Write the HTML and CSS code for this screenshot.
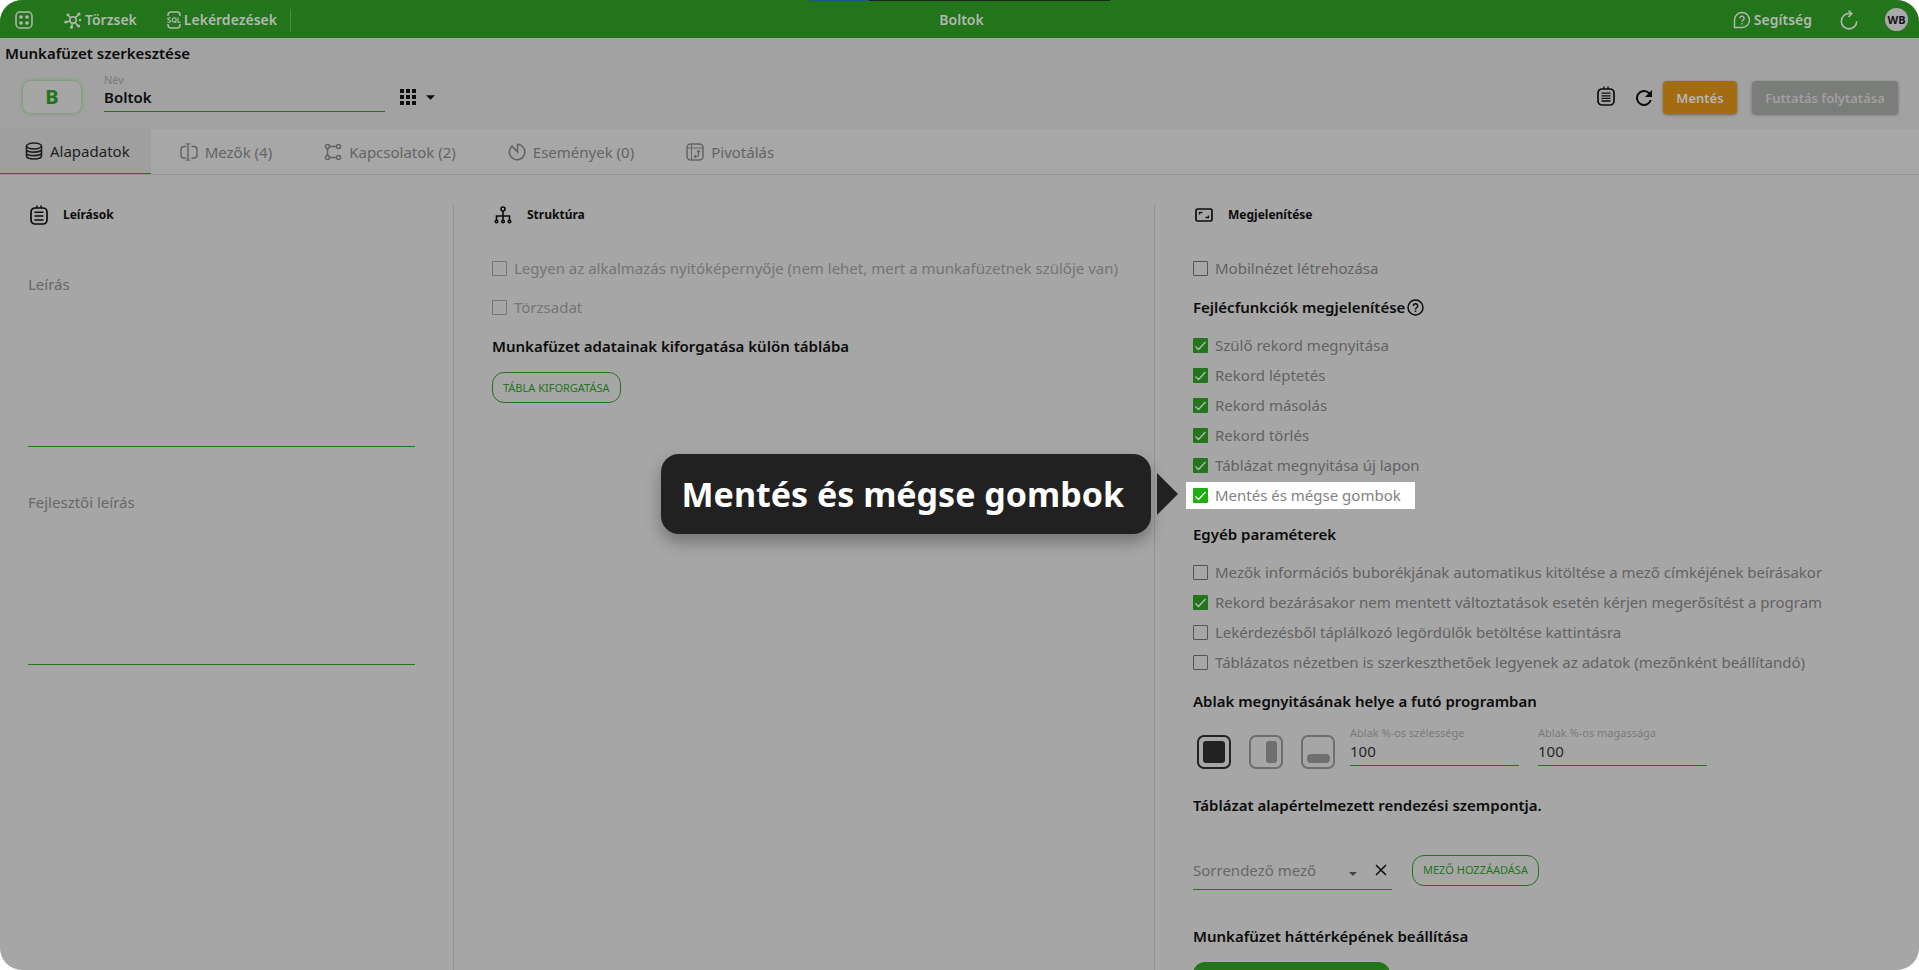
FILE: index.html
```html
<!DOCTYPE html>
<html lang="hu">
<head>
<meta charset="utf-8">
<title>Boltok</title>
<link rel="stylesheet" href="styles.css">
</head>
<body>
<div class="app">
  <header class="topbar">
    <nav class="topbar-side">
      <button class="bar-button apps" aria-label="Alkalmazások">
        <svg width="18" height="18" viewBox="0 0 18 18" fill="none" stroke="currentColor" stroke-width="1.5"><rect x="1" y="1" width="16" height="16" rx="4"/><g fill="currentColor" stroke="none"><circle cx="6" cy="6" r="1.8"/><circle cx="12" cy="6" r="1.8"/><circle cx="6" cy="12" r="1.8"/><circle cx="12" cy="12" r="1.8"/></g></svg>
      </button>
      <button class="bar-button masters">
        <svg width="18" height="18" viewBox="0 0 18 18" fill="none" stroke="currentColor" stroke-width="1.5"><circle cx="9" cy="9" r="3.2"/><path d="M6.6 6.8 4 4M11.4 6.8 14.5 3.5M6 10 2.5 11M11 11.6 14 15M8.4 12.2 7.6 16"/><g fill="currentColor" stroke="none"><circle cx="3.8" cy="3.8" r="1.4"/><circle cx="15" cy="3" r="1.6"/><circle cx="1.8" cy="11" r="1.5"/><circle cx="14.6" cy="15" r="1.6"/><circle cx="7.5" cy="16.3" r="1.5"/><circle cx="16" cy="9" r="1.2"/></g></svg>
        Törzsek
      </button>
      <button class="bar-button queries">
        <svg width="14" height="18" viewBox="0 0 14 18" fill="none" stroke="currentColor" stroke-width="1.5"><path d="M1 5V4a3 3 0 0 1 3-3h6a3 3 0 0 1 3 3v1M1 13v1a3 3 0 0 0 3 3h6a3 3 0 0 0 3-3v-1"/><g stroke-width="1.1"><path d="M3.800 7.200C3.200 6.500.7 6.500.7 7.800.7 9.300 3.900 8.600 3.900 10.200 3.900 11.500 1.200 11.500.4 10.700"/><ellipse cx="7.300" cy="9" rx="1.900" ry="2.200"/><path d="M7.600 10 9.200 11.600M11 6.600v4.600h2.800"/></g></svg>
        Lekérdezések
      </button>
      <span class="bar-divider"></span>
    </nav>
    <h1 class="bar-title">Boltok</h1>
    <div class="topbar-side end">
      <button class="bar-button help">
        <svg width="18" height="18" viewBox="0 0 18 18" fill="none" stroke="currentColor" stroke-width="1.400"><path d="M1.500 16.500V9A7.500 7.500 0 1 1 9 16.500z"/><path d="M6.900 7.200a2.100 2.100 0 1 1 3.100 1.900c-.8.400-1 .8-1 1.600M9 12v1.400"/></svg>
        Segítség
      </button>
      <button class="bar-button reload" aria-label="Újratöltés">
        <svg width="18" height="20" viewBox="0 0 18 20" fill="none" stroke="currentColor" stroke-width="1.600"><path d="M11 3.500H9A7.700 7.700 0 1 0 16.700 11.200M8.500.6 11.800 3.500 8.500 7"/></svg>
      </button>
      <span class="avatar">WB</span>
    </div>
    <span class="progress"><span class="progress-done"></span></span>
  </header>

  <section class="head">
    <h2 class="page-title">Munkafüzet szerkesztése</h2>
    <div class="head-row">
      <span class="badge">B</span>
      <div class="field name-field">
        <label for="name">Név</label>
        <input id="name" type="text" value="Boltok">
      </div>
      <button class="plain grid-button" aria-label="Ikon választása">
        <svg width="16" height="16" viewBox="0 0 16 16" fill="currentColor"><path d="M0 0h4v4H0zM6 0h4v4H6zM12 0h4v4h-4zM0 6h4v4H0zM6 6h4v4H6zM12 6h4v4h-4zM0 12h4v4H0zM6 12h4v4H6zM12 12h4v4h-4z"/></svg>
        <svg width="9" height="5" viewBox="0 0 10 5" fill="currentColor"><path d="M0 0h10L5 5z"/></svg>
      </button>
      <div class="actions">
        <button class="plain notes" aria-label="Leírás">
          <svg width="18" height="20" viewBox="0 0 18 20" fill="none" stroke="currentColor" stroke-width="1.700"><rect x="1" y="3" width="16" height="16" rx="4"/><path d="M7 3V.5M11 3V.5M4.500 7.200h9M4.500 9.800h9M4.500 12.400h9M4.500 15h9" stroke-width="1.300"/></svg>
        </button>
        <button class="plain refresh" aria-label="Frissítés">
          <svg width="16" height="16" viewBox="0 0 16 16"><path d="M13.650 2.350A8 8 0 1 0 15.730 10h-2.080A6 6 0 1 1 8 2c1.660 0 3.140.690 4.220 1.780L9 7h7V0z" fill="currentColor"/></svg>
        </button>
        <button class="solid save">Mentés</button>
        <button class="solid resume" disabled>Futtatás folytatása</button>
      </div>
    </div>
  </section>

  <nav class="tabs">
    <button class="tab active"><svg width="18" height="18" viewBox="0 0 18 18" fill="none" stroke="currentColor" stroke-width="1.600"><ellipse cx="9" cy="4" rx="7.500" ry="3"/><path d="M1.500 4v10c0 1.700 3.400 3 7.500 3s7.500-1.300 7.500-3V4M1.500 7.500c0 1.500 3.400 2.600 7.500 2.600s7.500-1.100 7.500-2.600M1.500 11c0 1.500 3.400 2.600 7.500 2.600s7.500-1.100 7.500-2.600"/></svg>Alapadatok</button>
    <button class="tab"><svg width="18" height="18" viewBox="0 0 18 18" fill="none" stroke="currentColor" stroke-width="1.500"><path d="M6 3.500H4a3 3 0 0 0-3 3v5.500a3 3 0 0 0 3 3h2M11.500 3.500H14a3 3 0 0 1 3 3v5.500a3 3 0 0 1-3 3h-2.500M8 1v16"/><path d="M5.500.8h5M5.500 17.200h5" stroke-width="1"/></svg>Mezők (4)</button>
    <button class="tab"><svg width="18" height="18" viewBox="0 0 18 18" fill="none" stroke="currentColor" stroke-width="1.500"><circle cx="3.500" cy="3.500" r="2"/><circle cx="14.500" cy="3.500" r="2"/><circle cx="3.500" cy="14.500" r="2"/><circle cx="14.500" cy="14.500" r="2"/><path d="M5.500 3.500h7M5.500 14.500h7M3.500 5.500v7"/></svg>Kapcsolatok (2)</button>
    <button class="tab"><svg width="18" height="18" viewBox="0 0 18 18" fill="none" stroke="currentColor" stroke-width="1.600"><path d="M9.500 1.300A7.700 7.700 0 1 1 4 3.200L9.500 9z"/></svg>Események (0)</button>
    <button class="tab"><svg width="18" height="18" viewBox="0 0 18 18" fill="none" stroke="currentColor" stroke-width="1.500"><rect x="1" y="1" width="16" height="16" rx="3.500"/><path d="M1 5h16M5.500 1v16" stroke-width="1"/><path d="M12.500 7.500v4a2 2 0 0 1-2 2H8.500M11 9l1.500-1.500L14 9M10 12l-1.500 1.500L10 15" stroke-width="1.200"/></svg>Pivotálás</button>
  </nav>

  <main class="columns">
    <section class="column">
      <h3 class="section-title"><svg width="18" height="20" viewBox="0 0 18 20" fill="none" stroke="currentColor" stroke-width="1.700"><rect x="1" y="3" width="16" height="16" rx="4"/><path d="M7 3V.5M11 3V.5M4.500 7.200h9M4.500 11h9M4.500 15h9" stroke-width="1.500"/></svg>Leírások</h3>
      <div class="note"><label for="desc">Leírás</label><textarea id="desc"></textarea></div>
      <div class="note"><label for="devdesc">Fejlesztői leírás</label><textarea id="devdesc"></textarea></div>
    </section>

    <section class="column">
      <h3 class="section-title"><svg width="18" height="18" viewBox="0 0 18 18" fill="none" stroke="currentColor" stroke-width="1.600"><circle cx="9" cy="3" r="2"/><path d="M9 5v10M2.500 14.500v-4.500h13v4.500"/><circle cx="2.500" cy="15.500" r="1.300"/><circle cx="9" cy="15.500" r="1.300"/><circle cx="15.500" cy="15.500" r="1.300"/></svg>Struktúra</h3>
      <label class="check off"><input type="checkbox" disabled>Legyen az alkalmazás nyitóképernyője (nem lehet, mert a munkafüzetnek szülője van)</label>
      <label class="check off spaced"><input type="checkbox" disabled>Törzsadat</label>
      <h4 class="group-title">Munkafüzet adatainak kiforgatása külön táblába</h4>
      <button class="outline">TÁBLA KIFORGATÁSA</button>
    </section>

    <section class="column">
      <h3 class="section-title"><svg width="18" height="14" viewBox="0 0 18 14" fill="none" stroke="currentColor" stroke-width="1.700"><rect x="1" y="1" width="16" height="12" rx="1.500"/><path d="M4.500 6.500V4.500h3M13.500 7.500v2h-3" stroke-width="1.300"/></svg>Megjelenítése</h3>
      <label class="check"><input type="checkbox">Mobilnézet létrehozása</label>
      <h4 class="group-title">Fejlécfunkciók megjelenítése<svg width="17" height="17" viewBox="0 0 17 17" fill="none" stroke="currentColor" stroke-width="1.500"><circle cx="8.500" cy="8.500" r="7.500"/><path d="M6.300 7a2.200 2.200 0 1 1 3.200 1.900c-.8.400-1 .8-1 1.500M8.500 11.600v1.500"/></svg></h4>
      <label class="check"><input type="checkbox" checked>Szülő rekord megnyitása</label>
      <label class="check"><input type="checkbox" checked>Rekord léptetés</label>
      <label class="check"><input type="checkbox" checked>Rekord másolás</label>
      <label class="check"><input type="checkbox" checked>Rekord törlés</label>
      <label class="check"><input type="checkbox" checked>Táblázat megnyitása új lapon</label>
      <div class="spot-row">
        <label class="check spotlight"><input type="checkbox" checked>Mentés és mégse gombok</label>
        <div class="callout" role="tooltip"><span class="callout-text">Mentés és mégse gombok</span><span class="callout-arrow"></span></div>
      </div>
      <h4 class="group-title">Egyéb paraméterek</h4>
      <label class="check"><input type="checkbox">Mezők információs buborékjának automatikus kitöltése a mező címkéjének beírásakor</label>
      <label class="check"><input type="checkbox" checked>Rekord bezárásakor nem mentett változtatások esetén kérjen megerősítést a program</label>
      <label class="check"><input type="checkbox">Lekérdezésből táplálkozó legördülők betöltése kattintásra</label>
      <label class="check"><input type="checkbox">Táblázatos nézetben is szerkeszthetőek legyenek az adatok (mezőnként beállítandó)</label>
      <h4 class="group-title">Ablak megnyitásának helye a futó programban</h4>
      <div class="window-row">
        <div class="places">
          <button class="plain place chosen" aria-label="Teljes"><svg width="34" height="34" viewBox="0 0 34 34"><rect x="1" y="1" width="32" height="32" rx="6" fill="none" stroke="currentColor" stroke-width="2"/><rect x="6" y="6" width="22" height="22" rx="3" fill="currentColor"/></svg></button>
          <button class="plain place" aria-label="Jobb oldal"><svg width="34" height="34" viewBox="0 0 34 34"><rect x="1" y="1" width="32" height="32" rx="6" fill="none" stroke="currentColor" stroke-width="2"/><rect x="17" y="6" width="11" height="22" rx="3" fill="currentColor"/></svg></button>
          <button class="plain place" aria-label="Alul"><svg width="34" height="34" viewBox="0 0 34 34"><rect x="1" y="1" width="32" height="32" rx="6" fill="none" stroke="currentColor" stroke-width="2"/><rect x="6" y="19" width="23" height="9" rx="4" fill="currentColor"/></svg></button>
        </div>
        <div class="field size-field"><label for="w">Ablak %-os szélessége</label><input id="w" type="text" value="100"></div>
        <div class="field size-field"><label for="h">Ablak %-os magassága</label><input id="h" type="text" value="100"></div>
      </div>
      <h4 class="group-title sort-title">Táblázat alapértelmezett rendezési szempontja.</h4>
      <div class="sort-row">
        <div class="sort-field">
          <select aria-label="Sorrendező mező"><option>Sorrendező mező</option></select>
          <svg class="caret" width="8" height="4" viewBox="0 0 8 4" fill="currentColor"><path d="M0 0h8L4 4z"/></svg>
          <button class="plain clear" aria-label="Törlés"><svg width="12" height="12" viewBox="0 0 12 12" fill="none" stroke="currentColor" stroke-width="1.500"><path d="M1 1l10 10M11 1 1 11"/></svg></button>
        </div>
        <button class="outline">MEZŐ HOZZÁADÁSA</button>
      </div>
      <h4 class="group-title map-title">Munkafüzet háttérképének beállítása</h4>
      <button class="map-button" aria-label="Háttérkép beállítása"></button>
    </section>
  </main>
</div>
</body>
</html>
```
FILE: styles.css
```css
* { box-sizing: border-box; }

body {
  margin: 0;
  background: #fff;
  font-family: "Noto Sans", "Open Sans", sans-serif;
  font-size: 15px;
  line-height: 20px;
  color: #0c0c0c;
}

h1, h2, h3, h4 { margin: 0; font-size: inherit; }

button, input, select, textarea {
  font: inherit;
  color: inherit;
  background: none;
  border: 0;
  border-radius: 0;
  padding: 0;
  margin: 0;
  outline: 0;
}

svg { display: block; flex: none; }

.app {
  display: flex;
  flex-direction: column;
  height: 100vh;
  overflow: hidden;
  border-radius: 22px;
  background: #a6a6a6;
}

/* Top bar */
.topbar {
  position: relative;
  flex: none;
  display: flex;
  align-items: center;
  height: 38px;
  padding-top: 2px;
  background: #22751a;
  color: #b4b8b3;
  font-size: 14px;
}

.topbar-side { flex: 1; display: flex; align-items: center; padding-left: 15px; }
.topbar-side.end { justify-content: flex-end; padding: 0 11px 0 0; }
.bar-button { display: flex; align-items: center; gap: 3px; font-weight: 600; }
.masters { margin-left: 31px; }
.queries { margin-left: 30px; }
.reload { margin: 0 27px 0 28px; }
.bar-divider { width: 1px; height: 23px; margin-left: 13px; background: #4b8d45; }
.bar-title { font-weight: 600; }

.avatar {
  width: 23px;
  height: 23px;
  margin-bottom: 2px;
  border-radius: 50%;
  background: #a9a9a9;
  color: #10101c;
  font-size: 11px;
  font-weight: 700;
  line-height: 23px;
  text-align: center;
}

.progress { position: absolute; top: 0; left: 809px; width: 301px; height: 1px; background: #222; }
.progress-done { display: block; width: 60px; height: 1px; background: #1d5a8c; }

/* Workbook header */
.head { flex: none; padding: 5px 21px 15px 5px; background: #a2a2a2; }
.page-title { font-weight: 600; }
.head-row { display: flex; align-items: flex-start; padding: 10px 0 0 18px; }

.badge {
  width: 58px;
  height: 32px;
  margin: 8px 23px 0 0;
  border-radius: 8px;
  background: #a6a6a6;
  box-shadow: 0 0 4px #5f9a5a;
  color: #22751a;
  font-size: 20px;
  font-weight: 700;
  line-height: 32px;
  text-align: center;
}

.field { display: flex; flex-direction: column; border-bottom: 1px solid #22751a; }
.field label { color: #7b7b7b; font-size: 11px; line-height: 14px; }
.field input { width: 100%; height: 20px; }
.name-field { width: 281px; height: 39px; }
.name-field input { font-weight: 600; }
.plain { display: flex; align-items: center; }
.grid-button { gap: 10px; margin: 16px 0 0 15px; }
.actions { display: flex; align-items: center; margin: 8px 0 0 auto; }
.notes { margin-bottom: 4px; }
.refresh { margin: 0 11px 0 21px; }

.solid {
  height: 33px;
  border-radius: 4px;
  color: #b5b5b5;
  font-size: 13px;
  font-weight: 600;
  box-shadow: 0 1px 3px #666;
}
.save { width: 74px; background: #a36c10; }
.resume { width: 146px; margin-left: 15px; background: #7b7d7a; color: #a0a0a0; }

/* Tabs */
.tabs { flex: none; display: flex; height: 46px; background: #a7a7a7; border-bottom: 1px solid #949494; }
.tab { display: flex; align-items: center; gap: 7px; padding: 0 23px 0 29px; color: #646464; }
.tab.active { padding: 0 21px 0 25px; background: #9f9f9f; border-bottom: 1px solid #22751a; color: #1e1e1e; }

/* Columns */
.columns { flex: 1; min-height: 0; display: grid; grid-template-columns: 454fr 701fr 764fr; padding-top: 29px; }
.column { padding: 0 0 0 38px; border-right: 1px solid #949494; }
.column:first-child { padding: 0 38px 0 28px; }
.column:last-child { border-right: 0; }
.section-title { display: flex; align-items: center; gap: 15px; height: 22px; margin-bottom: 27px; padding-left: 2px; font-size: 12px; font-weight: 700; }
.column:first-child .section-title { margin-bottom: 48px; }

.note { height: 173px; margin-bottom: 45px; display: flex; flex-direction: column; border-bottom: 1px solid #22751a; color: #686868; }
.note textarea { flex: 1; resize: none; }

.check { display: flex; align-items: center; gap: 7px; height: 30px; color: #626262; }
.check.off { color: #747474; }
.check.spaced { margin-top: 9px; }

.check input {
  appearance: none;
  flex: none;
  width: 15px;
  height: 15px;
  border: 1px solid #555;
  border-radius: 1px;
}
.check.off input { border-color: #757575; }
.check input:checked {
  border: 0;
  background: #22751a url("data:image/svg+xml,%3Csvg xmlns='http://www.w3.org/2000/svg' viewBox='0 0 15 15'%3E%3Cpath d='M2.500 8.500 5.500 11.500 12.500 4' fill='none' stroke='%23b8bcb8' stroke-width='1.300'/%3E%3C/svg%3E");
}

.group-title { display: flex; align-items: center; gap: 2px; height: 30px; margin: 9px 0 8px; font-weight: 600; }

.outline { height: 31px; padding: 0 10px; border: 1px solid #22751a; border-radius: 12px; color: #22751a; font-size: 11px; }
.group-title + .outline { margin-top: 3px; }

/* Highlighted option and its callout */
.spot-row { position: relative; display: flex; height: 30px; align-items: center; }
.spotlight { height: 27px; margin-left: -7px; padding: 0 14px 0 7px; background: #fff; color: #828282; }
.spotlight input:checked {
  background: #1fae12 url("data:image/svg+xml,%3Csvg xmlns='http://www.w3.org/2000/svg' viewBox='0 0 15 15'%3E%3Cpath d='M2.500 8.500 5.500 11.500 12.500 4' fill='none' stroke='%23fff' stroke-width='1.300'/%3E%3C/svg%3E");
}
.callout { position: absolute; right: 100%; bottom: -24px; display: flex; align-items: center; gap: 6px; margin-right: 15px; white-space: nowrap; }
.callout-text {
  padding: 20px 27px 20px 21px;
  border-radius: 18px;
  background: #212121;
  color: #fff;
  font-size: 34px;
  font-weight: 700;
  line-height: 40px;
  box-shadow: 0 8px 16px rgba(0, 0, 0, 0.3);
}
.callout-arrow { border-left: 21px solid #212121; border-top: 21px solid transparent; border-bottom: 21px solid transparent; }

/* Window placement */
.window-row { display: flex; align-items: flex-start; gap: 19px; height: 44px; }
.places { display: flex; gap: 18px; margin: 11px -4px 0 4px; }
.place { color: #6f6f6f; }
.place.chosen { color: #222; }
.size-field { width: 169px; height: 42px; padding-top: 2px; }
.size-field input { height: 21px; color: #262626; }

/* Sorting */
.sort-title { margin: 22px 0 31px; }
.sort-row { display: flex; align-items: center; gap: 20px; height: 38px; }
.sort-field { display: flex; align-items: center; width: 199px; height: 40px; border-bottom: 1px solid #22751a; }
.sort-field select { appearance: none; flex: 1; color: #666; }
.caret { margin: 8px 18px 0 0; color: #444; }
.clear { margin-right: 5px; }

.map-title { margin: 32px 0 11px; }
.map-button { display: block; width: 197px; height: 36px; border-radius: 12px; background: #22751a; }
```
